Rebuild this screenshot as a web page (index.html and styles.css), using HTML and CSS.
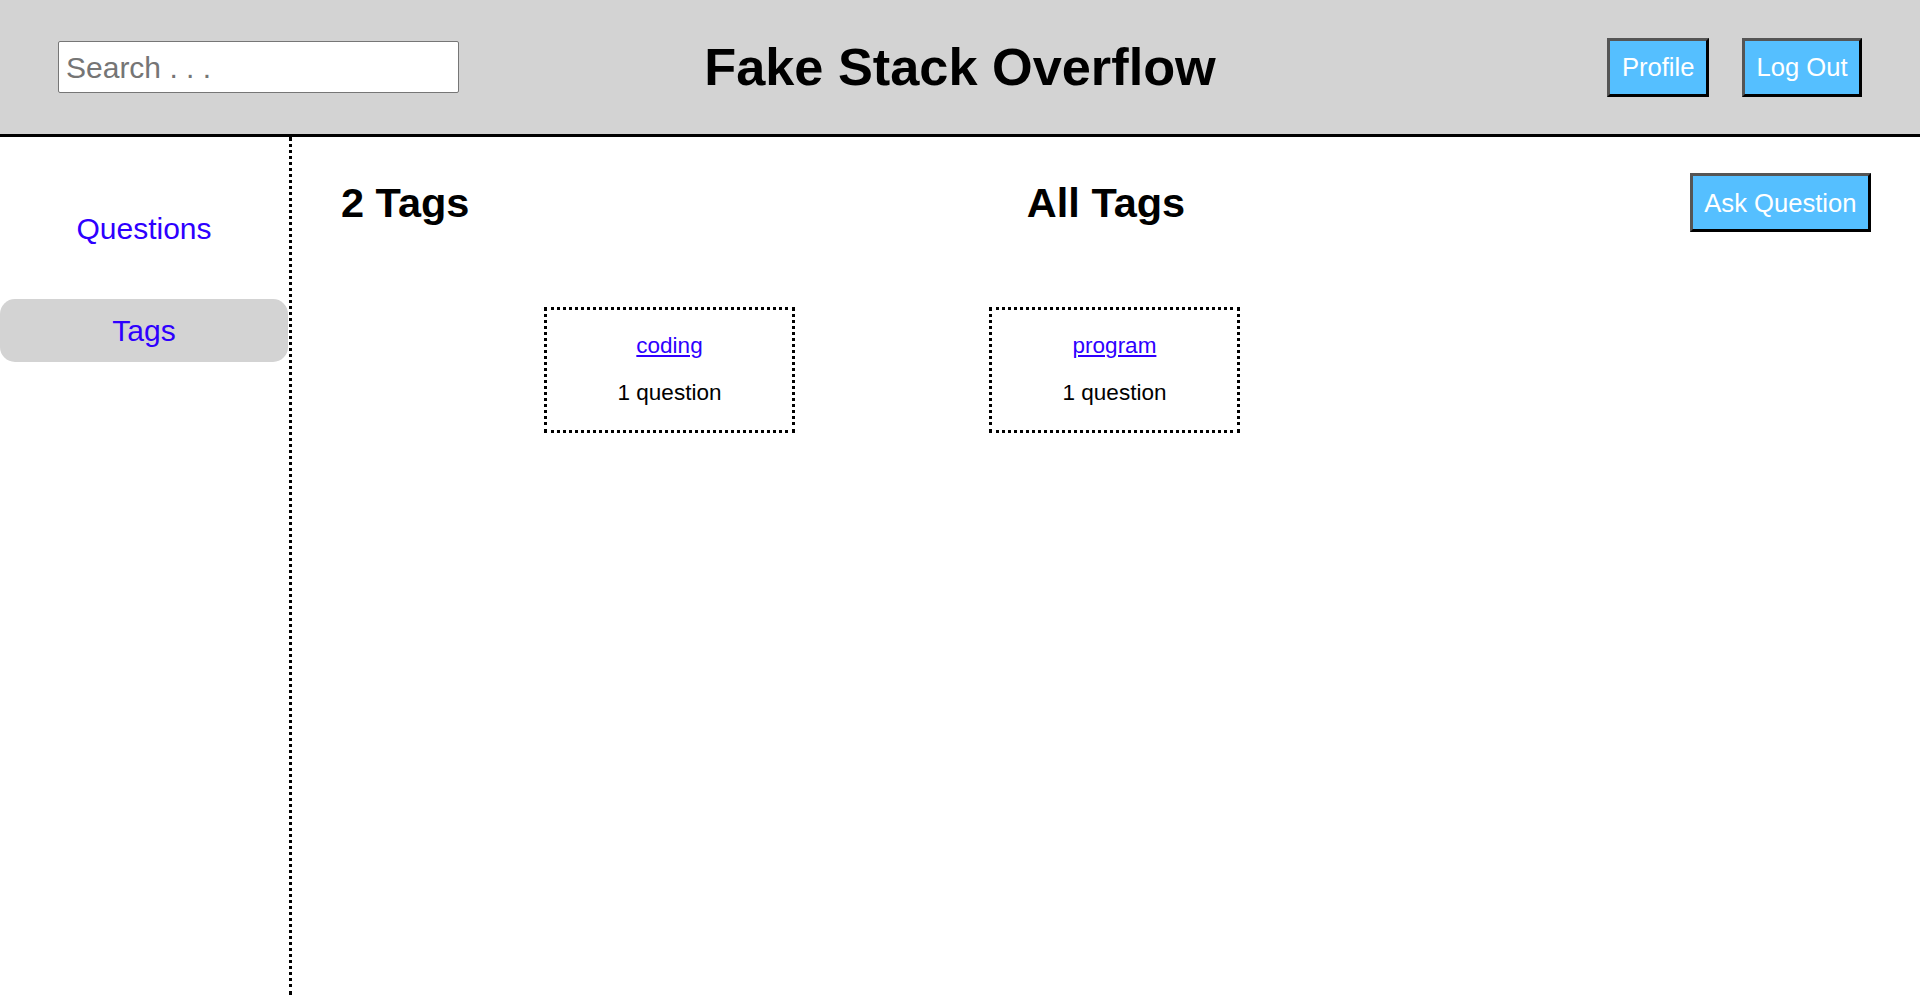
FILE: index.html
```html
<!DOCTYPE html>
<html lang="en">
<head>
<meta charset="utf-8">
<title>Fake Stack Overflow</title>
<link rel="stylesheet" href="styles.css">
</head>
<body>
<header class="header">
  <div class="header-left">
    <input class="search" type="text" placeholder="Search . . .">
  </div>
  <h1 class="title">Fake Stack Overflow</h1>
  <div class="header-right">
    <button class="btn">Profile</button>
    <button class="btn">Log Out</button>
  </div>
</header>
<div class="page">
  <nav class="sidebar">
    <a class="nav-item" href="#">Questions</a>
    <a class="nav-item active" href="#">Tags</a>
  </nav>
  <main class="main">
    <div class="main-head">
      <h2 class="count">2 Tags</h2>
      <h2 class="heading">All Tags</h2>
      <div class="head-right"><button class="btn">Ask Question</button></div>
    </div>
    <div class="tags">
      <div class="tag-card">
        <a class="tag-link" href="#">coding</a>
        <div class="tag-count">1 question</div>
      </div>
      <div class="tag-card">
        <a class="tag-link" href="#">program</a>
        <div class="tag-count">1 question</div>
      </div>
    </div>
  </main>
</div>
</body>
</html>
```

FILE: styles.css
```css
* { box-sizing: border-box; }

html, body {
  margin: 0;
  padding: 0;
  background: #fff;
  font-family: "Liberation Sans", Arial, sans-serif;
  color: #000;
}

.header {
  height: 137px;
  background: #d3d3d3;
  border-bottom: 3px solid #000;
  display: grid;
  grid-template-columns: 1fr auto 1fr;
  align-items: center;
  padding: 0 58px;
}

.header-left { display: flex; justify-content: flex-start; }

.search {
  width: 401px;
  height: 52px;
  border: 1px solid #767676;
  border-radius: 2px;
  background: #fff;
  padding: 1px 7px 0;
  font-family: "Liberation Sans", Arial, sans-serif;
  font-size: 30px;
  color: #000;
  outline: none;
}
.search::placeholder { color: #757575; }

.title {
  margin: 0;
  font-size: 52.3px;
  font-weight: bold;
  line-height: 60px;
  white-space: nowrap;
}

.header-right {
  display: flex;
  justify-content: flex-end;
  gap: 33px;
}

.btn {
  background: #55bfff;
  color: #fff;
  font-family: "Liberation Sans", Arial, sans-serif;
  font-size: 25.6px;
  line-height: 30px;
  padding: 11.5px 11.5px;
  border: 3px solid;
  border-color: #555 #000 #000 #555;
  border-radius: 0;
  cursor: pointer;
  white-space: nowrap;
}

.page {
  display: flex;
  min-height: calc(100vh - 137px);
}

.sidebar {
  width: 292px;
  flex: none;
  border-right: 3px dotted #000;
  padding: 40px 1px 0 0;
  display: flex;
  flex-direction: column;
}

.nav-item {
  height: 63px;
  margin: 20px 0 19px;
  display: flex;
  align-items: center;
  justify-content: center;
  font-size: 30px;
  color: #2e00ff;
  text-decoration: none;
  border-radius: 15px;
}
.nav-item.active { background: #d3d3d3; }

.main {
  flex: 1;
  padding: 36px 49px 0 49px;
}

.main-head {
  display: grid;
  grid-template-columns: 1fr auto 1fr;
  align-items: center;
}

.count, .heading {
  margin: 0;
  font-size: 41.5px;
  font-weight: bold;
  line-height: 46px;
}

.head-right { display: flex; justify-content: flex-end; }

.tags {
  display: flex;
  flex-wrap: wrap;
  gap: 40px 194px;
  margin-top: 75px;
  padding-left: 203px;
}

.tag-card {
  width: 251px;
  height: 126px;
  border: 3px dotted #000;
  display: flex;
  flex-direction: column;
  align-items: center;
  padding-top: 23px;
  font-size: 22.5px;
  line-height: 26px;
}

.tag-link {
  color: #2e00ff;
  text-decoration: underline;
  margin-bottom: 21px;
}

.tag-count { color: #000; }
```
